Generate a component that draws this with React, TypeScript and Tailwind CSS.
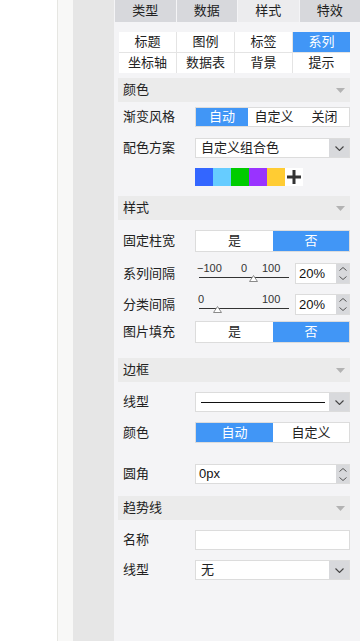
import React from "react";

const FONT = { fontFamily: '"Liberation Sans", "Noto Sans CJK SC", sans-serif' };

const tabs = ["类型", "数据", "样式", "特效"];
const subTabs = ["标题", "图例", "标签", "系列", "坐标轴", "数据表", "背景", "提示"];
const swatches = ["bg-[#3366ff]", "bg-[#66ccff]", "bg-[#00cc00]", "bg-[#9933ff]", "bg-[#ffcc33]"];

function Chevron() {
  return (
    <svg width="9" height="5" viewBox="0 0 9 5">
      <path d="M0.5 0.5 L4.5 4.5 L8.5 0.5" fill="none" stroke="#444" strokeWidth="1.1" />
    </svg>
  );
}

function SectionHeader({ title, className }: { title: string; className: string }) {
  return (
    <div className={`flex h-[24px] items-center justify-between bg-[#ebebeb] pl-[5px] pr-[5px] text-[13px] text-[#222] ${className}`}>
      <span>{title}</span>
      <svg width="9" height="5" viewBox="0 0 9 5">
        <polygon points="0,0 9,0 4.5,5" fill="#b3b3b3" />
      </svg>
    </div>
  );
}

function Row({ label, className, children }: { label: string; className: string; children: React.ReactNode }) {
  return (
    <div className={`flex items-center leading-[16px] ${className}`}>
      <div className="w-[77px] shrink-0 pl-[5px] text-[13px] text-[#222]">{label}</div>
      <div className="flex-1">{children}</div>
    </div>
  );
}

function Toggle({ options, active, widths, h }: { options: string[]; active: number; widths: string[]; h: string }) {
  return (
    <div className={`flex border border-[#dcdcdc] bg-white text-[13px] ${h}`}>
      {options.map((o, i) => (
        <div
          key={o}
          className={`flex items-center justify-center ${widths[i]} ${i === active ? "bg-[#4196f6] text-white" : "text-[#222]"}`}
        >
          {o}
        </div>
      ))}
    </div>
  );
}

function Select({ children }: { children: React.ReactNode }) {
  return (
    <div className="flex h-[20px] border border-[#dcdcdc] bg-white text-[13px] text-[#222]">
      <div className="flex flex-1 items-center pl-[5px]">{children}</div>
      <div className="flex w-[20px] items-center justify-center bg-[#d8d9dc]">
        <Chevron />
      </div>
    </div>
  );
}

function Spinner() {
  return (
    <div className="flex w-[13px] flex-col items-center justify-center gap-[5px] bg-[#d8d9dc]">
      <svg width="8" height="4" viewBox="0 0 8 4">
        <path d="M0.5 3.5 L4 0.5 L7.5 3.5" fill="none" stroke="#555" strokeWidth="1" />
      </svg>
      <svg width="8" height="4" viewBox="0 0 8 4">
        <path d="M0.5 0.5 L4 3.5 L7.5 0.5" fill="none" stroke="#555" strokeWidth="1" />
      </svg>
    </div>
  );
}

function NumberInput({ value, wide }: { value: string; wide?: boolean }) {
  return (
    <div className={`flex border border-[#dcdcdc] bg-white ${wide ? "h-[20px] w-full" : "h-[21px] w-[55px]"}`}>
      <div className="flex flex-1 items-center pl-[3px] text-[13px] text-[#111]">{value}</div>
      <Spinner />
    </div>
  );
}

function Slider({ labels, thumb }: { labels: { text: string; left: number }[]; thumb: number }) {
  return (
    <div className="flex h-[21px] items-center">
      <div className="relative h-[21px] w-[98px]">
        {labels.map((l) => (
          <span
            key={l.text}
            className="absolute top-[0px] text-[11px] leading-[11px] text-[#333]"
            style={{ left: l.left }}
          >
            {l.text}
          </span>
        ))}
        <div className="absolute left-[4px] right-[4px] top-[14px] h-px bg-[#333]" />
        <svg className="absolute top-[12px]" style={{ left: thumb - 4 }} width="9" height="7" viewBox="0 0 9 7">
          <polygon points="4.5,0.5 8.5,6.5 0.5,6.5" fill="#fff" stroke="#8a8a8a" strokeWidth="1" />
        </svg>
      </div>
      <div className="ml-auto">
        <NumberInput value="20%" />
      </div>
    </div>
  );
}

export default function App() {
  return (
    <div className="flex h-[641px] w-[360px] overflow-hidden" style={FONT}>
      <div className="w-[57px] bg-white" />
      <div className="w-px bg-[#e6e6e2]" />
      <div className="w-[15px] bg-[#f8f8f7]" />
      <div className="w-[41px] bg-[#e6e6e6]" />
      <div className="flex-1 bg-[#f4f4f6]">
        {/* top tabs */}
        <div className="grid h-[22px] grid-cols-4 gap-px pl-px">
          {tabs.map((t, i) => (
            <div
              key={t}
              className={`flex items-center justify-center text-[13px] text-[#222] ${i === 2 ? "bg-[#ececee]" : "bg-[#d7d8dc]"}`}
            >
              {t}
            </div>
          ))}
        </div>

        {/* sub tabs */}
        <div className="ml-[5px] mt-[10px] grid w-[231px] grid-cols-4 gap-px bg-[#e4e4e4]">
          {subTabs.map((t, i) => (
            <div
              key={t}
              className={`flex h-[20px] items-center justify-center text-[13px] ${i === 3 ? "bg-[#4196f6] text-white" : "bg-white text-[#222]"}`}
            >
              {t}
            </div>
          ))}
        </div>

        <div className="ml-[4px] w-[232px]">
          <SectionHeader title="颜色" className="mt-[5px]" />
          <Row label="渐变风格" className="mt-[5px]">
            <Toggle h="h-[20px]" options={["自动", "自定义", "关闭"]} active={0} widths={["w-[52px]", "w-[52px]", "flex-1"]} />
          </Row>
          <Row label="配色方案" className="mt-[11px]">
            <Select>自定义组合色</Select>
          </Row>
          <div className="ml-[77px] mt-[10px] flex h-[18px]">
            {swatches.map((s) => (
              <div key={s} className={`w-[18px] ${s}`} />
            ))}
            <div className="flex w-[18px] items-center justify-center bg-white">
              <svg width="14" height="14" viewBox="0 0 14 14">
                <rect x="0" y="5.5" width="14" height="3" fill="#333" />
                <rect x="5.5" y="0" width="3" height="14" fill="#333" />
              </svg>
            </div>
          </div>

          <SectionHeader title="样式" className="mt-[10px]" />
          <Row label="固定柱宽" className="mt-[10px]">
            <Toggle h="h-[22px]" options={["是", "否"]} active={1} widths={["w-[77px]", "flex-1"]} />
          </Row>
          <Row label="系列间隔" className="mt-[11px]">
            <Slider
              thumb={58}
              labels={[
                { text: "−100", left: 2 },
                { text: "0", left: 46 },
                { text: "100", left: 67 },
              ]}
            />
          </Row>
          <Row label="分类间隔" className="mt-[10px]">
            <Slider
              thumb={22}
              labels={[
                { text: "0", left: 3 },
                { text: "100", left: 67 },
              ]}
            />
          </Row>
          <Row label="图片填充" className="mt-[6px]">
            <Toggle h="h-[22px]" options={["是", "否"]} active={1} widths={["w-[77px]", "flex-1"]} />
          </Row>

          <SectionHeader title="边框" className="mt-[15px]" />
          <Row label="线型" className="mt-[10px]">
            <Select>
              <div className="h-px w-[124px] bg-[#111]" />
            </Select>
          </Row>
          <Row label="颜色" className="mt-[10px]">
            <Toggle h="h-[21px]" options={["自动", "自定义"]} active={0} widths={["w-[77px]", "flex-1"]} />
          </Row>
          <Row label="圆角" className="mt-[21px]">
            <NumberInput value="0px" wide />
          </Row>

          <SectionHeader title="趋势线" className="mt-[12px]" />
          <Row label="名称" className="mt-[10px]">
            <div className="h-[20px] border border-[#dcdcdc] bg-white" />
          </Row>
          <Row label="线型" className="mt-[10px]">
            <Select>无</Select>
          </Row>
        </div>
      </div>
    </div>
  );
}
